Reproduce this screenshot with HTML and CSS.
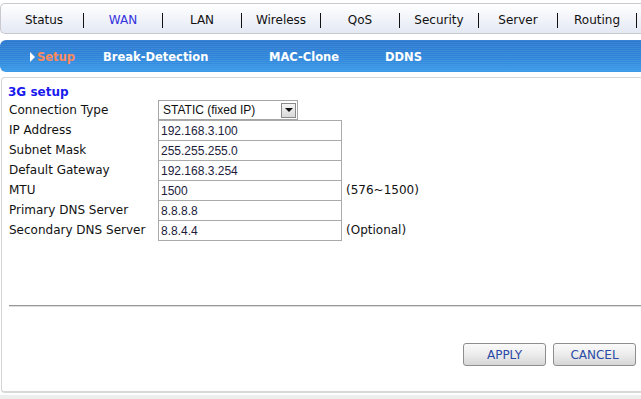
FILE: index.html
```html
<!DOCTYPE html>
<html lang="en">
<head>
    <meta charset="UTF-8">
    <meta name="viewport" content="width=device-width, initial-scale=1.0">
    <title>3G Setup</title>

    <link rel="stylesheet" href="styles.css">
</head>
<body>
    <ul class="main-nav">
        <li>Status</li>
        <li class="active">WAN</li>
        <li>LAN</li>
        <li>Wireless</li>
        <li>QoS</li>
        <li>Security</li>
        <li>Server</li>
        <li>Routing</li>
    </ul>

    <div class="sub-nav">
        <span class="sub-item current"><span class="arrow"></span>Setup</span>
        <span class="sub-item">Break-Detection</span>
        <span class="sub-item">MAC-Clone</span>
        <span class="sub-item">DDNS</span>
    </div>

    <div class="panel">
        <h3>3G setup</h3>
        <div class="form-grid">
            <label>Connection Type</label>
            <div class="field">
                <div class="fake-select">
                    <span class="select-text">STATIC (fixed IP)</span>
                    <span class="select-btn"></span>
                </div>
            </div>

            <label>IP Address</label>
            <div class="field"><input type="text" value="192.168.3.100"></div>

            <label>Subnet Mask</label>
            <div class="field"><input type="text" value="255.255.255.0"></div>

            <label>Default Gateway</label>
            <div class="field"><input type="text" value="192.168.3.254"></div>

            <label>MTU</label>
            <div class="field"><input type="text" value="1500"><span class="hint">(576~1500)</span></div>

            <label>Primary DNS Server</label>
            <div class="field"><input type="text" value="8.8.8.8"></div>

            <label>Secondary DNS Server</label>
            <div class="field"><input type="text" value="8.8.4.4"><span class="hint">(Optional)</span></div>
        </div>

        <hr class="divider">

        <div class="actions">
            <button type="button">APPLY</button>
            <button type="button">CANCEL</button>
        </div>
    </div>
    <div class="footer-band"></div>
</body>
</html>
```

FILE: styles.css
```css
body {
    margin: 0;
    background: #fff;
    font-family: 'DejaVu Sans', Verdana, sans-serif;
    font-size: 12px;
    color: #111;
    overflow: hidden;
}

/* top menu */
.main-nav {
    list-style: none;
    margin: 3px 0 0 0;
    padding: 3px 0 0 4px;
    height: 26px;
    display: flex;
    align-items: center;
    border: 1px solid #c9c9cf;
    border-right: none;
    border-radius: 5px 0 0 5px;
    background: linear-gradient(to bottom, #ffffff 0%, #f3f5fa 45%, #e3e8f3 100%);
}
.main-nav li {
    width: 78px;
    height: 15px;
    line-height: 15px;
    text-align: center;
    border-right: 1px solid #111;
    color: #111;
}
.main-nav li.active { color: #3333dd; }

/* blue sub menu */
.sub-nav {
    margin-top: 6px;
    height: 32px;
    padding-top: 2px;
    box-sizing: border-box;
    display: flex;
    align-items: center;
    border-radius: 6px 0 0 6px;
    background:
        repeating-linear-gradient(to bottom, rgba(255,255,255,0.07) 0 1px, transparent 1px 2px),
        linear-gradient(to bottom, #2b79cf 0%, #2f86da 55%, #3a9ae8 100%);
    font-weight: bold;
    font-size: 11.5px;
    color: #fff;
}
.sub-item { display: flex; align-items: center; }
.sub-item:nth-child(1) { margin-left: 30px; width: 73px; }
.sub-item:nth-child(2) { width: 166px; }
.sub-item:nth-child(3) { width: 116px; }
.sub-item.current { color: #ff8a5c; }
.arrow {
    width: 0;
    height: 0;
    border-top: 5px solid transparent;
    border-bottom: 5px solid transparent;
    border-left: 5px solid #fff;
    margin-right: 2px;
}

/* content */
.panel {
    margin: 5px 0 0 1px;
    padding: 7px 0 0 6px;
    border: 1px solid #d6d6d6;
    border-bottom: 2px solid #d8d8d8;
    border-right: none;
    border-radius: 4px 0 0 4px;
    box-sizing: border-box;
    height: 316px;
}
.panel h3 {
    margin: 0;
    height: 15px;
    line-height: 15px;
    font-size: 12px;
    color: #1a1aee;
}
.form-grid {
    display: grid;
    grid-template-columns: 150px 1fr;
    grid-auto-rows: 20px;
}
.form-grid label {
    line-height: 20px;
    padding-left: 1px;
    color: #111;
}
.field {
    display: flex;
    align-items: flex-start;
}
.field input {
    width: 184px;
    height: 21px;
    margin: 0;
    padding: 0 2px;
    box-sizing: border-box;
    border: 1px solid #aaa;
    font-family: 'Liberation Sans', Arial, sans-serif;
    font-size: 12px;
    color: #1c1c3c;
    outline: none;
}
.hint {
    margin-left: 4px;
    line-height: 20px;
}
.fake-select {
    width: 140px;
    height: 20px;
    box-sizing: border-box;
    border: 1px solid #a5a5a5;
    display: flex;
    align-items: center;
    justify-content: space-between;
    font-family: 'Liberation Sans', Arial, sans-serif;
    font-size: 12px;
    color: #111;
}
.select-text { padding-left: 4px; }
.select-btn {
    width: 15px;
    height: 15px;
    margin-right: 1px;
    box-sizing: border-box;
    border: 1px solid #8a8a8a;
    background: linear-gradient(to bottom, #f4f4f4, #d9d9d9);
    display: flex;
    align-items: center;
    justify-content: center;
}
.select-btn::after {
    content: "";
    border-left: 4px solid transparent;
    border-right: 4px solid transparent;
    border-top: 4px solid #111;
}

.divider {
    margin: 65px 0 0 1px;
    border: none;
    border-top: 1px solid #999;
    border-bottom: 1px solid #ddd;
    height: 0;
}

.actions {
    display: flex;
    justify-content: flex-end;
    gap: 7px;
    margin-top: 36px;
    padding-right: 5px;
}
.actions button {
    width: 83px;
    height: 23px;
    border: 1px solid #8e8e8e;
    border-radius: 3px;
    background: linear-gradient(to bottom, #fafafa 0%, #ececec 50%, #d6d6d6 100%);
    font-family: 'DejaVu Sans', Verdana, sans-serif;
    font-size: 12px;
    color: #2a4aa6;
    padding: 0;
}

.footer-band {
    margin-top: 2px;
    height: 6px;
    background: #eeeeee;
}
```
